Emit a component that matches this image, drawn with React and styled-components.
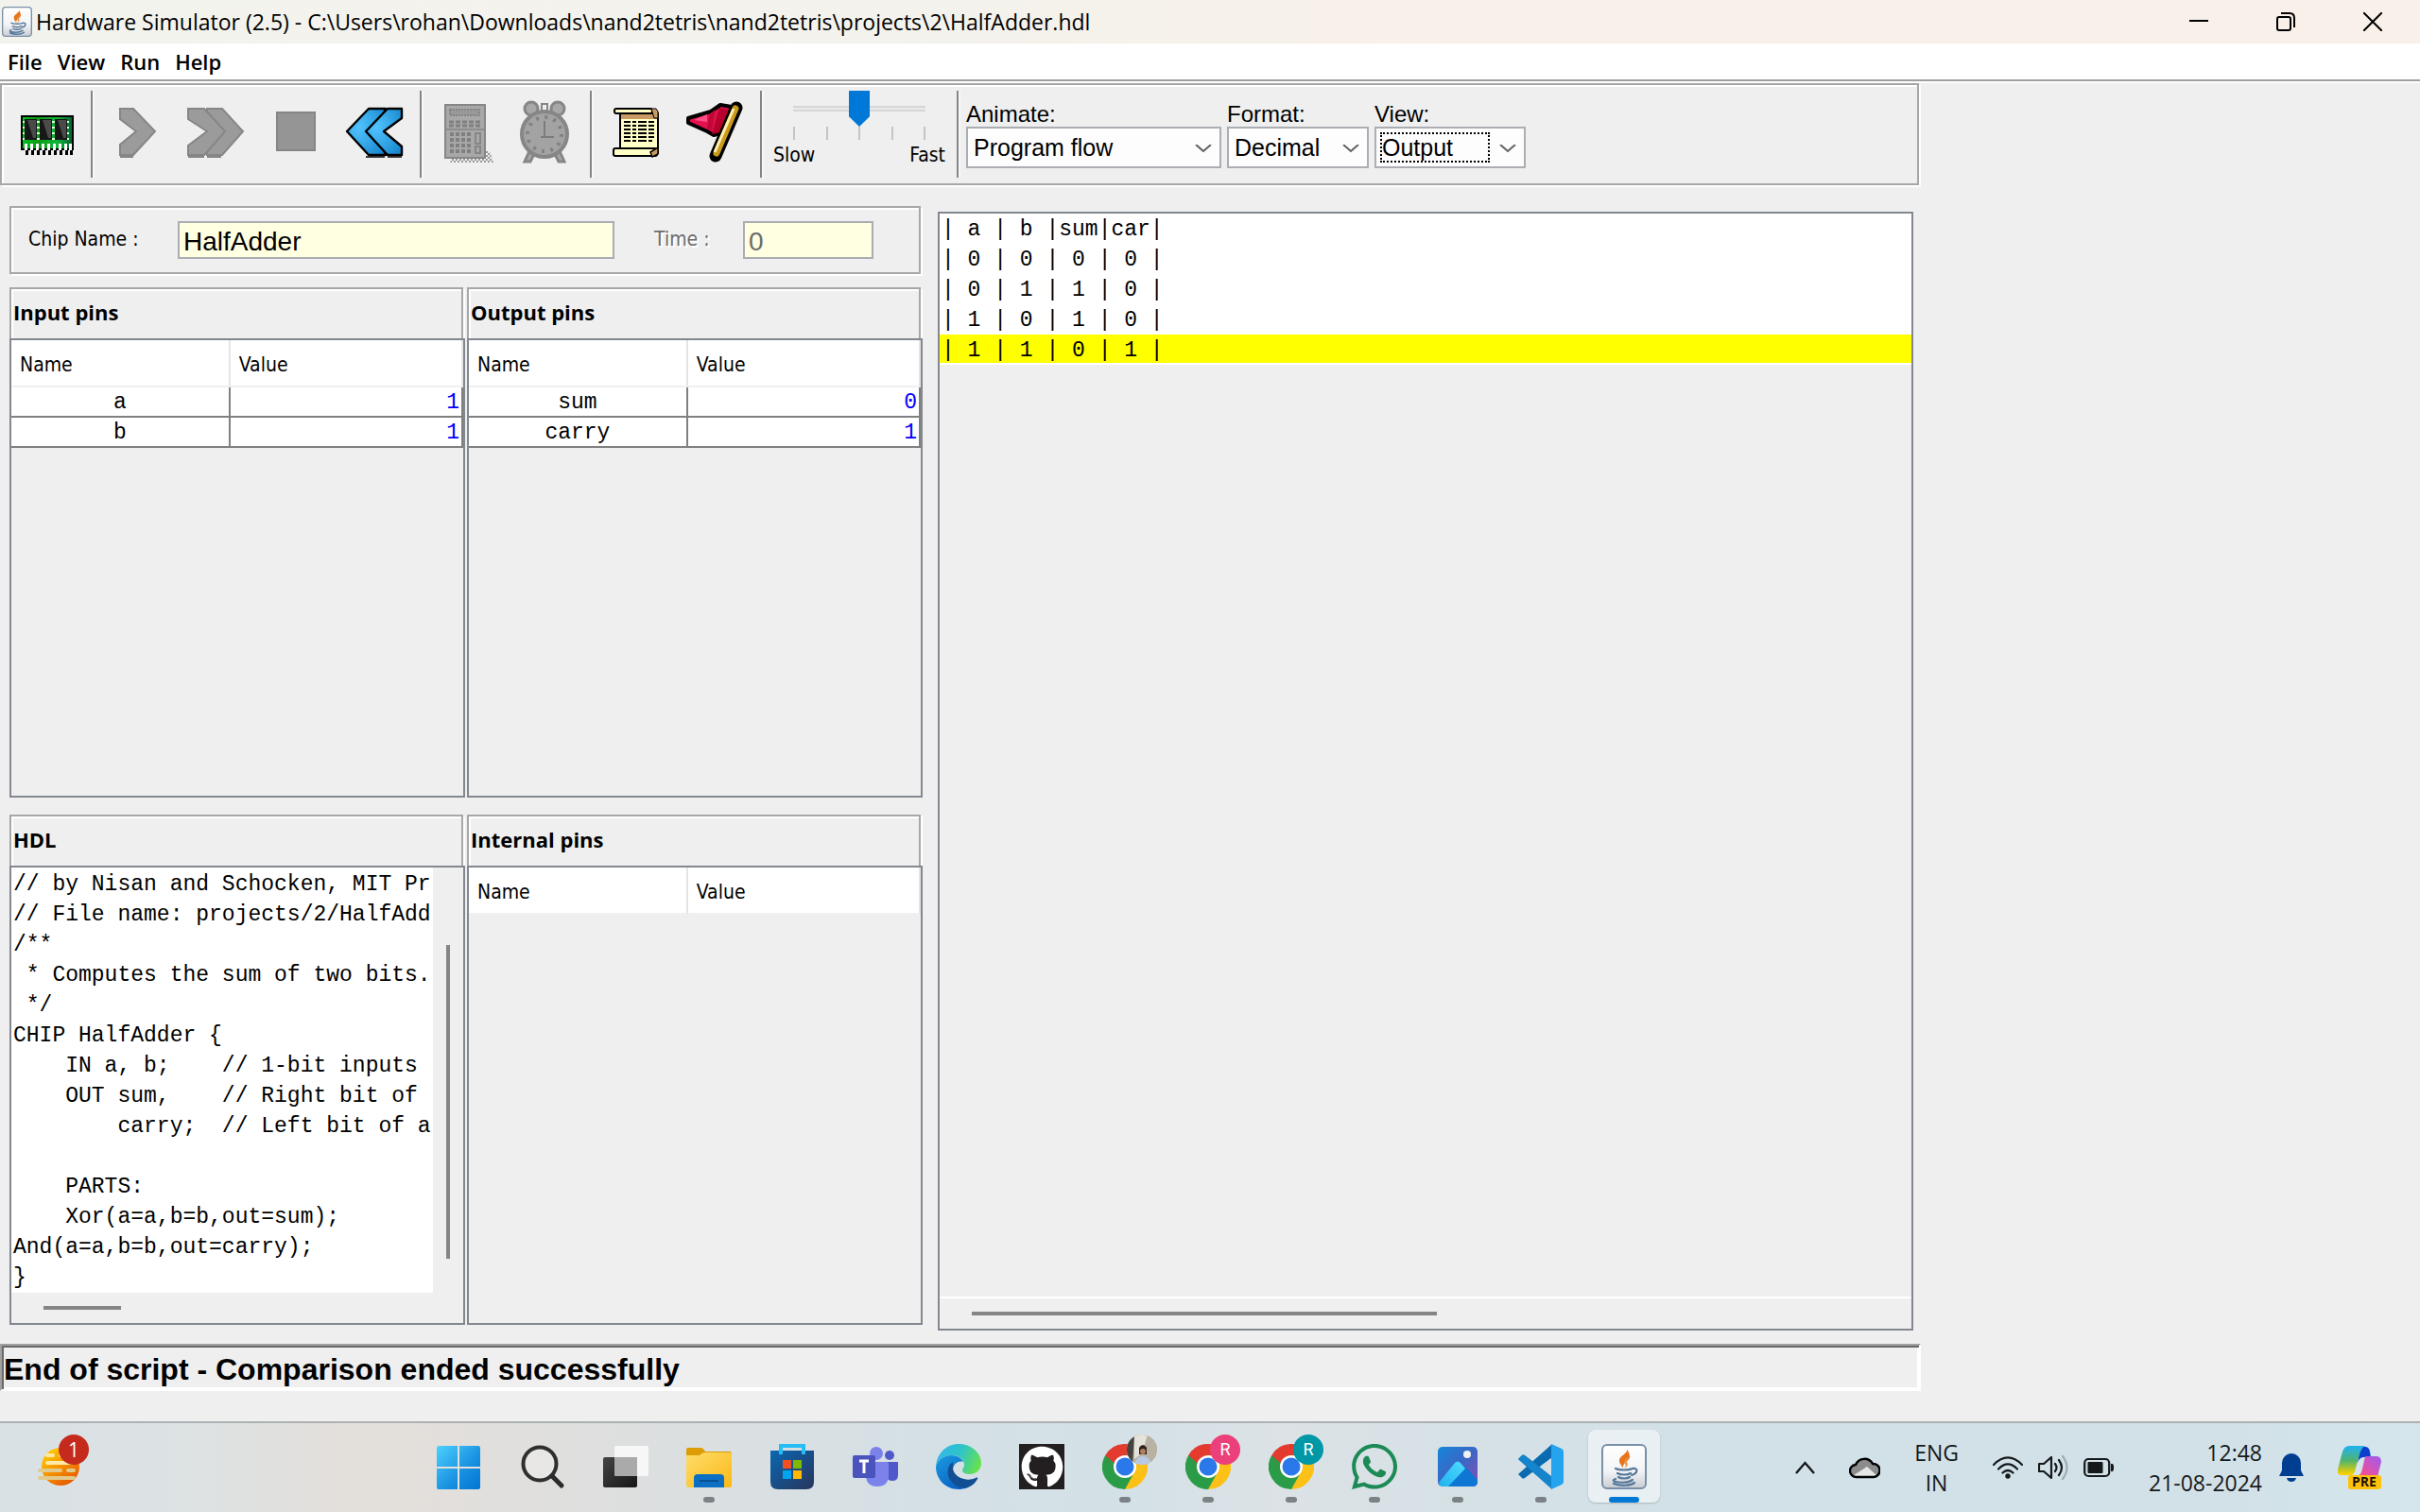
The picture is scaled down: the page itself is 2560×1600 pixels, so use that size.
import React from "react";
import styled, { createGlobalStyle } from "styled-components";
import { FaGithub, FaWhatsapp } from "react-icons/fa";

const UI = `"DejaVu Sans Condensed", "DejaVu Sans", sans-serif`;
const ARIAL = `"Liberation Sans", Arial, sans-serif`;
const MONO = `"Liberation Mono", "Courier New", monospace`;
const SYSTEM = `"Open Sans", "Noto Sans", sans-serif`;

const GlobalStyle = createGlobalStyle`
  * { box-sizing: border-box; }
  body { margin: 0; background: #efefef; color: #000; }
  button, input, select { font: inherit; color: inherit; margin: 0; padding: 0; border: 0; background: none; border-radius: 0; }
  svg { display: block; }
`;

const Desktop = styled.div`
  display: flex;
  flex-direction: column;
  min-height: 100vh;
`;

/* ---------- window frame ---------- */
const TitleBar = styled.header`
  display: flex;
  align-items: center;
  height: 46px;
  padding: 0 4px 0 2px;
  background: linear-gradient(90deg, #f3f3ee, #f4f2ec 40%, #f9f0ea 60%);
  font-family: ${SYSTEM};
  font-size: 23px;
`;
const Title = styled.h1`
  margin: 0 auto 0 4px;
  font-size: 23px;
  font-weight: 400;
  line-height: 32px;
  white-space: pre;
`;
const CaptionButton = styled.button`
  display: grid;
  place-items: center;
  width: 92px;
  height: 46px;
`;
const MenuBar = styled.nav`
  display: flex;
  gap: 16px;
  height: 40px;
  padding: 0 8px;
  background: #fff;
  border-bottom: 2px solid #a0a0a0;
  box-shadow: 0 2px 0 #fff;
  font-family: ${SYSTEM};
  font-size: 22px;
  font-weight: 600;
  line-height: 38px;
`;
const MenuItem = styled.button``;

const Application = styled.main`
  display: flex;
  flex: 1;
  flex-direction: column;
  padding: 0 528px 32px 0;
`;

/* ---------- etched frames ---------- */
const Etched = styled.div`
  margin-right: 2px;
  border: 2px solid #a7a7a7;
  box-shadow: inset 2px 2px 0 #fff, 2px 2px 0 #fff;
`;

/* ---------- toolbar ---------- */
const Toolbar = styled(Etched)`
  display: flex;
  height: 108px;
  margin-top: 2px;
`;
const ToolGroup = styled.div`
  display: flex;
  padding: 0 4px 0 6px;
`;
const Separator = styled.div`
  width: 2px;
  height: 92px;
  margin-top: 6px;
  background: #858585;
  box-shadow: 2px 0 0 #f8f8f8;
`;
const ToolButton = styled.button`
  width: 84px;
  height: 104px;
`;
const SpeedBox = styled.div`
  display: flex;
  flex-direction: column;
  align-items: center;
  width: 206px;
  padding-top: 6px;
  font-family: ${UI};
  font-size: 21px;
  line-height: 32px;
`;
const SpeedRange = styled.input`
  appearance: none;
  width: 140px;
  height: 38px;
  &::-webkit-slider-runnable-track {
    height: 38px;
    background: linear-gradient(transparent 16px, #d6d6d6 16px 18px, #e7eaea 18px 20px, #d6d6d6 20px 22px, transparent 22px);
  }
  &::-webkit-slider-thumb {
    appearance: none;
    width: 22px;
    height: 38px;
    background: #0078d7;
    clip-path: polygon(0 0, 100% 0, 100% 72%, 50% 100%, 0 72%);
  }
`;
const Ticks = styled.div`
  display: flex;
  justify-content: space-between;
  width: 140px;
  height: 14px;
`;
const Tick = styled.span`
  width: 2px;
  background: #c4c4c4;
`;
const SpeedLabels = styled.div`
  display: flex;
  justify-content: space-between;
  width: 182px;
`;
const Combos = styled.div`
  display: flex;
  gap: 6px;
  padding: 18px 0 0 8px;
  font-family: ${ARIAL};
`;
const ComboField = styled.label`
  display: flex;
  flex-direction: column;
  font-size: 24px;
  line-height: 26px;
`;
const ComboFrame = styled.span`
  display: flex;
  position: relative;
  width: ${(p) => p.$width}px;
  height: 44px;
  padding: 4px;
  border: 2px solid #abadb3;
  background: #fdfdfd;
  font-size: 25px;
`;
const ComboSelect = styled.select`
  appearance: none;
  width: 100%;
  height: 32px;
  padding-left: 2px;
  line-height: 32px;
  outline: none;
`;
const FocusRing = styled.span`
  position: absolute;
  inset: 4px 36px 4px 4px;
  border: 2px dotted #000;
  pointer-events: none;
`;
const ComboArrow = styled.svg`
  position: absolute;
  right: 8px;
  top: 17px;
  pointer-events: none;
`;

/* ---------- workspace ---------- */
const Workspace = styled.div`
  display: grid;
  flex: 1;
  grid-template-columns: minmax(0, 966fr) minmax(0, 1032fr);
  gap: 16px;
  padding: 22px 8px 14px 10px;
`;
const LeftSide = styled.div`
  display: flex;
  flex-direction: column;
  gap: 14px;
  padding-bottom: 6px;
`;
const ChipBar = styled(Etched)`
  display: flex;
  align-items: center;
  height: 72px;
  padding: 0 48px 0 18px;
  font-family: ${UI};
  font-size: 21px;
`;
const ChipLabel = styled.label`
  flex: none;
  width: ${(p) => p.$width}px;
  padding-bottom: 2px;
  color: ${(p) => (p.$dim ? "#6d6d6d" : "#000")};
  text-shadow: ${(p) => (p.$dim ? "2px 2px 0 #fff" : "none")};
`;
const ChipInput = styled.input`
  flex: ${(p) => p.$grow} 1 0;
  min-width: 0;
  height: 40px;
  margin-right: ${(p) => p.$after}px;
  padding: 4px 4px 0;
  border: 2px solid #abadb3;
  background: #ffffe1;
  color: ${(p) => (p.disabled ? "#6d6d6d" : "#000")};
  font-family: ${ARIAL};
  font-size: 28px;
`;
const PanelGrid = styled.div`
  display: grid;
  flex: 1;
  grid-template-columns: repeat(2, minmax(0, 1fr));
  grid-auto-rows: minmax(0, 1fr);
  gap: 18px 2px;
`;
const Panel = styled.section`
  display: flex;
  flex-direction: column;
`;
const PanelTitle = styled(Etched).attrs({ as: "h2" })`
  height: 54px;
  margin: 0 2px 0 0;
  padding: 0 4px 0 2px;
  border-bottom: 0;
  font-family: ${SYSTEM};
  font-size: 22px;
  font-weight: 700;
  line-height: 48px;
`;
const PanelBody = styled.div`
  flex: 1;
  min-height: 0;
  border: 2px solid #828790;
  z-index: 1;
`;
const PinTable = styled.table`
  width: 100%;
  border-collapse: separate;
  border-spacing: 0;
  table-layout: fixed;
`;
const PinHead = styled.th`
  width: ${(p) => p.$width};
  height: 50px;
  padding: 4px 0 0 9px;
  background: #fff;
  border-right: 2px solid #e5e5e5;
  border-bottom: 2px solid #f0f0f0;
  font-family: ${UI};
  font-size: 21px;
  font-weight: 400;
  text-align: left;
`;
const PinCell = styled.td`
  height: 32px;
  padding: ${(p) => (p.$value ? "2px 2px 0 0" : "2px 0 0")};
  background: #fff;
  border-right: 2px solid #808080;
  border-bottom: 2px solid #808080;
  color: ${(p) => (p.$value ? "#00f" : "#000")};
  font-family: ${MONO};
  font-size: 23px;
  line-height: 28px;
  text-align: ${(p) => (p.$value ? "right" : "center")};
`;
const HdlBody = styled(PanelBody)`
  display: grid;
  grid-template: minmax(0, 1fr) 32px / minmax(0, 1fr) 32px;
`;
const Code = styled.pre`
  margin: 0;
  padding: 2px 2px 0;
  background: #fff;
  overflow: hidden;
  font-family: ${MONO};
  font-size: 23px;
  line-height: 32px;
`;
const VerticalTrack = styled.div`
  padding: 82px 14px 36px;
`;
const HorizontalTrack = styled.div`
  height: 32px;
  padding: 14px 34px;
`;
const Thumb = styled.div`
  width: ${(p) => p.$width};
  height: ${(p) => p.$height};
  background: #858585;
`;
const OutputPanel = styled.section`
  display: flex;
  flex-direction: column;
  margin-top: 6px;
  border: 2px solid #828790;
`;
const OutputLines = styled.div`
  flex: 1;
  border-bottom: 2px solid #fff;
`;
const OutputLine = styled.pre`
  height: 32px;
  margin: 0;
  padding: 0 2px;
  background: ${(p) => (p.$current ? "#ff0" : "#fff")};
  border-bottom: 2px solid #fff;
  font-family: ${MONO};
  font-size: 23px;
  line-height: 34px;
`;
const StatusBar = styled.div`
  height: 50px;
  border-style: solid;
  border-width: 2px;
  border-color: #a0a0a0 #fff #fff #a0a0a0;
  box-shadow: inset 2px 2px 0 #696969, inset -2px -2px 0 #fff;
  padding-left: 2px;
  font-family: ${ARIAL};
  font-size: 32px;
  font-weight: 700;
  line-height: 50px;
  white-space: nowrap;
`;

/* ---------- taskbar ---------- */
const Taskbar = styled.footer`
  display: flex;
  height: 96px;
  border-top: 2px solid #acb1b3;
  background: linear-gradient(90deg, #d9e1e6, #dde2e3 8%, #e3dfdb 14%, #e3dfdb 17%, #dddfdf 26%, #d5e0e5 38%, #d3e1e7 46%, #dce2e6 53%, #d6e1e6 60%, #d1e1e7 72%, #d1e1e7 92%, #d5e6ed);
  font-family: ${SYSTEM};
  color: #16191b;
`;
const Widgets = styled.div`
  width: 442px;
  padding: 12px 0 0 40px;
`;
const WidgetsButton = styled.button`
  display: block;
  position: relative;
  width: 54px;
  height: 54px;
`;
const Badge = styled.span`
  position: absolute;
  top: 0;
  right: 0;
  width: 32px;
  height: 32px;
  border-radius: 50%;
  background: #c42b1c;
  color: #fff;
  font-size: 21px;
  line-height: 32px;
  text-align: center;
`;
const Apps = styled.div`
  display: flex;
  margin-right: auto;
`;
const AppButton = styled.button`
  display: flex;
  flex-direction: column;
  align-items: center;
  justify-content: space-between;
  position: relative;
  width: 76px;
  height: 77px;
  margin: 7px 6px 0;
  padding-top: 15px;
  border-radius: 8px;
  background: ${(p) => (p.$active ? "rgba(255,255,255,.5)" : "none")};
  box-shadow: ${(p) => (p.$active ? "0 1px 2px rgba(0,0,0,.2)" : "none")};
`;
const Indicator = styled.span`
  width: ${(p) => (p.$active ? 32 : 12)}px;
  height: 6px;
  border-radius: 3px;
  background: ${(p) => (p.$active ? "#0078d4" : "#7b8184")};
  visibility: ${(p) => (p.$on ? "visible" : "hidden")};
`;
const Profile = styled.span`
  position: absolute;
  top: 5px;
  right: 4px;
  width: 32px;
  height: 32px;
  border-radius: 50%;
  overflow: hidden;
  background: ${(p) => p.$color};
  color: #fff;
  font-family: Roboto, sans-serif;
  font-size: 18px;
  line-height: 32px;
  text-align: center;
`;
const Tray = styled.div`
  display: flex;
  align-items: center;
  gap: 36px;
  padding-right: 41px;
  font-size: 23px;
  line-height: 32px;
`;
const TrayGroup = styled.div`
  display: flex;
  align-items: center;
  gap: ${(p) => p.$gap}px;
`;
const TrayButton = styled.button`
  text-align: ${(p) => p.$align || "center"};
`;
const GithubTile = styled.span`
  display: grid;
  place-items: center;
  width: 48px;
  height: 48px;
  background: #231f20;
  color: #fff;
`;

/* ---------- icons ---------- */
const JavaIcon = ({ size, id }) => (
  <svg width={size} height={size} viewBox="0 0 48 48">
    <defs>
      <linearGradient id={id} x1="0" y1="0" x2="0" y2="1">
        <stop offset="0" stopColor="#fff" />
        <stop offset=".6" stopColor="#f3f4f6" />
        <stop offset="1" stopColor="#c9ccd1" />
      </linearGradient>
    </defs>
    <rect x="1" y="1" width="46" height="46" rx="5" fill={`url(#${id})`} stroke="#7890a8" strokeWidth="2" />
    <path d="M27 5c2 5-9 8-8 13 0 3 3 5 4 8-2-6 8-8 7-13 0-3-2-5-3-8z" fill="#e8741b" />
    <path d="M31 13c-5 2-8 5-6 8 1 2 1 3-1 5 5-3 4-5 3-7-1-2 1-4 4-6z" fill="#f09448" />
    <g fill="none" stroke="#55789b" strokeWidth="2.2" strokeLinecap="round">
      <path d="M15 26c4 2 14 2 18 0M17 31c3 2 11 2 14 0M18 35c3 2 9 2 12 0M33 26c6-1 6 5-1 7" />
      <path d="M15 37c-9 3 11 6 18 1M13 42c8 3 18 2 22-1" />
    </g>
  </svg>
);

const Icon = ({ children }) => (
  <svg width="84" height="104" viewBox="0 0 84 104">{children}</svg>
);

const LoadChipIcon = () => (
  <Icon>
    <defs>
      <linearGradient id="board"><stop stopColor="#00c322" /><stop offset=".3" stopColor="#0a9c14" /><stop offset=".7" stopColor="#10b53c" /><stop offset="1" stopColor="#04602c" /></linearGradient>
    </defs>
    <rect x="15" y="33" width="54" height="35" fill="url(#board)" stroke="#000" strokeWidth="2" />
    {[18, 34, 50].map((x) => (
      <g key={x}>
        <path d={`M${x - 1} 38v20M${x + 14} 38v20`} stroke="#dfffdc" strokeWidth="2" strokeDasharray="2 4" />
        <rect x={x} y="36" width="13" height="22" fill="#171717" />
        <path d={`M${x + 3} 37l6 19h3v-19z`} fill="#4a4a4a" />
      </g>
    ))}
    {[18, 24, 30, 36, 42, 48, 54, 60, 65].map((x) => (
      <g key={x}>
        <rect x={x} y="62" width="3" height="7" fill="#fff" />
        <rect x={x + 1} y="69" width="3" height="5" fill="#000" />
      </g>
    ))}
  </Icon>
);
const StepIcon = () => (
  <Icon>
    <path d="M23 25h14l23 24-23 25H23v-11l17-14L23 36z" fill="#9b9b9b" stroke="#868686" strokeWidth="2" />
    <path d="M23 76h14" stroke="#868686" strokeWidth="2" />
  </Icon>
);
const RunIcon = () => (
  <Icon>
    <g fill="#9b9b9b" stroke="#868686" strokeWidth="2">
      <path d="M11 25h17l23 24-23 25H11v-10l20-15L11 36z" />
      <path d="M31 25h16l22 24-22 25H31v-3l19-22L31 28z" />
    </g>
    <path d="M11 76h17M31 76h15" stroke="#868686" strokeWidth="2" />
  </Icon>
);
const StopIcon = () => (
  <Icon><rect x="21" y="29" width="40" height="40" fill="#959595" stroke="#868686" strokeWidth="2" /></Icon>
);
const RewindIcon = () => (
  <Icon>
    <defs>
      <radialGradient id="rew" cx=".3" cy=".4" r=".8"><stop stopColor="#52c3ff" /><stop offset="1" stopColor="#1989cf" /></radialGradient>
    </defs>
    <path d="M31 76h20M54 76h15" stroke="#3a3a3a" strokeWidth="2" />
    <g fill="url(#rew)" stroke="#000" strokeWidth="2.4" strokeLinejoin="round">
      <path d="M52 25H34L11 49l23 25h18L42 49z" />
      <path d="M69 25H54L31 49l23 25h15V65L50 49l19-14z" />
    </g>
  </Icon>
);
const CalculatorIcon = () => (
  <Icon>
    <defs>
      <pattern id="dither" width="4" height="4" patternUnits="userSpaceOnUse"><path d="M0 0h2v2H0zM2 2h2v2H2z" fill="#999" /></pattern>
    </defs>
    <path d="M26 78h26V70h14l4 12H24z" fill="url(#dither)" />
    <rect x="19" y="21" width="42" height="56" fill="#a8a8a8" stroke="#868686" strokeWidth="2" />
    <rect x="24" y="26" width="31" height="6" fill="#999" stroke="#858585" strokeWidth="2" strokeDasharray="2 1" />
    <path d="M23 39h34M23 43h34" stroke="#808080" strokeWidth="3" strokeDasharray="5 2" />
    <path d="M20 47h40" stroke="#8d8d8d" strokeWidth="2" />
    <path d="M24 52h22M24 58h22M24 64h22M24 70h22" stroke="#808080" strokeWidth="4" strokeDasharray="4 2" />
    <rect x="51" y="51" width="5" height="11" fill="none" stroke="#868686" strokeWidth="2" />
    <rect x="51" y="65" width="5" height="7" fill="none" stroke="#868686" strokeWidth="2" />
  </Icon>
);
const ClockIcon = () => (
  <Icon>
    <g fill="#a8a8a8" stroke="#868686" strokeWidth="3">
      <circle cx="26" cy="25" r="7" /><circle cx="54" cy="25" r="7" />
      <path d="M24 70l-5 11h6l4-8M56 70l5 11h-6l-4-8" />
    </g>
    <path d="M37 20h6v10h-6z" fill="#efefef" stroke="#868686" strokeWidth="2" />
    <circle cx="40" cy="52" r="24" fill="#a3a3a3" stroke="#868686" strokeWidth="4" />
    <circle cx="40" cy="52" r="18" fill="none" stroke="#818181" strokeWidth="4" strokeDasharray="3 6.4" />
    <path d="M40 38v17h10M36 55h4" fill="none" stroke="#7c7c7c" strokeWidth="2" />
  </Icon>
);
const ScriptIcon = () => (
  <Icon>
    <path d="M24 30h40v42H24z" fill="#ffffc6" stroke="#000" strokeWidth="2" />
    <path d="M25 31h38v5H25z" fill="#c99a63" />
    <rect x="18" y="25" width="40" height="5" rx="2" fill="#ffffc6" stroke="#000" strokeWidth="2" />
    <path d="M57 25h5l2 3v7h-4z" fill="#c99a63" stroke="#000" strokeWidth="1" />
    <rect x="17" y="67" width="46" height="8" rx="2" fill="#ffffc6" stroke="#000" strokeWidth="2" />
    <path d="M56 71l8-5v7l-6 3z" fill="#c99a63" stroke="#000" strokeWidth="1.5" />
    <path d="M28 39h32M28 43h32M28 47h32M28 51h32M28 55h32M28 59h30" stroke="#000" strokeWidth="2" strokeDasharray="7 2 4 2 9 2" />
  </Icon>
);
const BreakpointIcon = () => (
  <Icon>
    <path d="M36 28l10-7 12 2-11 28-8 2-7-4-20-9v-5z" fill="#e3114d" stroke="#000" strokeWidth="4" strokeLinejoin="round" />
    <path d="M45 24l9 2-8 24-9 2z" fill="#b8002c" />
    <path d="M35 30l6-4-4 22-5-2z" fill="#c00836" />
    <path d="M18 37l14-6v8z" fill="#ff4d88" />
    <path d="M63 24L41 75" stroke="#000" strokeWidth="13" strokeLinecap="round" />
    <path d="M62 25L42 72" stroke="#c99a1c" strokeWidth="7" strokeLinecap="round" />
    <path d="M60 25L40 71" stroke="#ffeeb0" strokeWidth="3" />
  </Icon>
);

const WidgetsIcon = () => (
  <svg width="54" height="54" viewBox="0 0 54 54">
    <defs>
      <linearGradient id="sun" x1="0" y1="0" x2=".7" y2="1"><stop offset=".1" stopColor="#ffcf00" /><stop offset=".5" stopColor="#f79a00" /><stop offset="1" stopColor="#e65800" /></linearGradient>
    </defs>
    <circle cx="24" cy="34" r="20" fill="url(#sun)" />
    <g stroke="#ffe9a8" strokeWidth="4" strokeLinecap="round">
      <path d="M10 22h6M24 22h8M10 30h26" /><path d="M32 38h6M2 38h22M2 46h36" stroke="#e2c98c" />
    </g>
  </svg>
);
const Svg48 = ({ children }) => (
  <svg width="48" height="48" viewBox="0 0 48 48">{children}</svg>
);
const StartIcon = () => (
  <Svg48>
    <defs>
      <linearGradient id="win" gradientUnits="userSpaceOnUse" x1="0" y1="0" x2="48" y2="48"><stop stopColor="#50d3ff" /><stop offset=".6" stopColor="#1690e0" /><stop offset="1" stopColor="#0074d3" /></linearGradient>
    </defs>
    <path d="M3 2h19v22H0V4q0-2 3-2zM24 2h20q2 0 2 2v20H24zM0 26h22v22H3q-3 0-3-2zM24 26h22v20q0 2-2 2H24z" fill="url(#win)" />
  </Svg48>
);
const SearchIcon = () => (
  <Svg48>
    <circle cx="21" cy="21" r="17.5" fill="rgba(255,255,255,.25)" stroke="#2f2f2f" strokeWidth="4" />
    <path d="M34 34l10 10" stroke="#2a2a2a" strokeWidth="5" strokeLinecap="round" />
  </Svg48>
);
const TaskViewIcon = () => (
  <Svg48>
    <defs>
      <linearGradient id="tv" x1="0" y1="0" x2="1" y2="1"><stop stopColor="#444" /><stop offset="1" stopColor="#161616" /></linearGradient>
    </defs>
    <rect x="0" y="14" width="36" height="32" rx="2" fill="url(#tv)" />
    <rect x="12" y="2" width="36" height="32" rx="2" fill="#f8f8f8" fillOpacity=".92" />
    <path d="M12 14h24v20H14q-2 0-2-2z" fill="#aaa" />
  </Svg48>
);
const FolderIcon = () => (
  <Svg48>
    <defs>
      <linearGradient id="fold" x1="0" y1="0" x2="1" y2="1"><stop stopColor="#ffdc6b" /><stop offset="1" stopColor="#fbb916" /></linearGradient>
    </defs>
    <path d="M0 6q0-2 2-2h13q3 0 5 4h26q2 0 2 3v14H0z" fill="#dd9d05" />
    <path d="M0 12h14q3-3 6-3h26q2 0 2 2v33q0 2-2 2H2q-2 0-2-2z" fill="url(#fold)" />
    <path d="M8 46V36q0-4 4-4h24q4 0 4 4v10z" fill="#0c6fc4" />
    <path d="M14 39h20" stroke="#094f93" strokeWidth="2" />
  </Svg48>
);
const StoreIcon = () => (
  <Svg48>
    <defs>
      <linearGradient id="bag" x1="0" y1="0" x2="1" y2="1"><stop stopColor="#0a67b2" /><stop offset="1" stopColor="#28355c" /></linearGradient>
    </defs>
    <path d="M1 7h46v33q0 8-8 8H9q-8 0-8-8z" fill="url(#bag)" />
    <path d="M12 11V2h24v9" fill="none" stroke="#25bdf5" strokeWidth="4" />
    <path d="M14 17h9v9h-9z" fill="#f25022" /><path d="M25 17h9v9h-9z" fill="#7fba00" />
    <path d="M14 28h9v9h-9z" fill="#00a4ef" /><path d="M25 28h9v9h-9z" fill="#ffb900" />
  </Svg48>
);
const TeamsIcon = () => (
  <Svg48>
    <circle cx="39" cy="12" r="5" fill="#5059c9" />
    <path d="M36 19h12v14q0 6-6 6t-6-6z" fill="#5059c9" />
    <circle cx="25" cy="10" r="7" fill="#7b83eb" />
    <path d="M14 19h22q2 0 2 2v12q0 12-12 12T14 33z" fill="#7b83eb" />
    <rect x="0" y="12" width="24" height="24" rx="2" fill="#4b53bc" />
    <path d="M7 18h10M12 18v13" stroke="#fff" strokeWidth="3" />
  </Svg48>
);
const EdgeIcon = () => (
  <Svg48>
    <defs>
      <linearGradient id="edgeA" x1="0" y1=".3" x2="1" y2=".6"><stop stopColor="#35b5ea" /><stop offset=".5" stopColor="#2ec5c8" /><stop offset="1" stopColor="#68e24a" /></linearGradient>
      <linearGradient id="edgeB" x1="0" y1="0" x2=".6" y2="1"><stop stopColor="#1a9be0" /><stop offset="1" stopColor="#0b62c4" /></linearGradient>
    </defs>
    <path d="M0 24C1 10 11 0 24 0c14 0 24 10 24 20 0 8-6 12-12 12-5 0-8-2-8-4s2-3 2-6c0-5-5-10-13-10C8 12 2 17 0 24z" fill="url(#edgeA)" />
    <path d="M0 24c2-7 8-12 17-12 6 0 10 3 12 7-6-2-11 3-11 9 0 10 7 17 16 18-3 1-6 2-10 2C10 48 0 37 0 24z" fill="url(#edgeB)" />
    <path d="M18 19c-6 4-7 12-3 19 4 6 11 10 19 8 5-2 8-5 10-9 1-1 0-2-2-1-11 5-24-2-24-11 0-2 0-4 0-6z" fill="#124f92" />
  </Svg48>
);
const ChromeIcon = () => (
  <Svg48>
    <path d="M24 24L3.200 12A24 24 0 0 1 44.800 12z" fill="#e33b2e" />
    <path d="M24 24L44.800 12A24 24 0 0 1 24 48z" fill="#fbc116" />
    <path d="M24 24L24 48A24 24 0 0 1 3.200 12z" fill="#2a9c48" />
    <path d="M24 12h20.800L34 30z" fill="#fbc116" />
    <path d="M34 30L24 48l-10-18z" fill="#2a9c48" />
    <path d="M3.200 12L14 30l10-18z" fill="#e33b2e" />
    <path d="M3.200 12L14 30l3-6z" fill="#2a9c48" />
    <circle cx="24" cy="24" r="12" fill="#fff" />
    <circle cx="24" cy="24" r="9.500" fill="#2a78ea" />
  </Svg48>
);
const ProfilePhoto = () => (
  <svg width="32" height="32" viewBox="0 0 32 32">
    <path d="M0 0h32v32H0z" fill="#b9b2a4" /><path d="M0 0h8L6 32H0z" fill="#45423f" />
    <path d="M8 0h14l-6 20-8 6z" fill="#e4e2da" />
    <path d="M13 14q4-6 8 0v7h-8z" fill="#30221b" />
    <circle cx="17" cy="18" r="3" fill="#b37f60" /><path d="M8 32q2-9 9-9t9 9z" fill="#b9cbe4" />
  </svg>
);
const PhotosIcon = () => (
  <Svg48>
    <defs>
      <linearGradient id="ph" x1="0" y1="0" x2="1" y2="1"><stop stopColor="#1487dc" /><stop offset=".5" stopColor="#3c66c4" /><stop offset="1" stopColor="#8b4db5" /></linearGradient>
      <linearGradient id="hill" x1="0" y1="1" x2="1" y2="0"><stop stopColor="#22b1ee" /><stop offset="1" stopColor="#4cdcff" /></linearGradient>
    </defs>
    <rect x="3" y="3" width="42" height="42" rx="5" fill="url(#ph)" />
    <path d="M12 45l16-19q3-3 6 0l11 12v2q0 5-5 5z" fill="#0e76d3" />
    <path d="M4 41l17-21q3-3 6 0l5 6-18 19H8q-3 0-4-4z" fill="url(#hill)" />
    <circle cx="34" cy="11" r="4" fill="#f1f1f1" />
  </Svg48>
);
const CodeIcon = () => (
  <Svg48>
    <path d="M0 16l4-4q1-1 3 0l29 23v13z" fill="#1584cb" />
    <path d="M0 32l4 4q1 1 3 0l29-22V0z" fill="#0a6bb0" />
    <path d="M0 16l4-4q1-1 3 0l29 23v13z" fill="#1584cb" />
    <path d="M35 0l11 5q2 1 2 3v32q0 2-2 3l-11 5z" fill="#26a3ee" />
  </Svg48>
);
const ChevronIcon = () => (
  <svg width="21" height="14" viewBox="0 0 21 14"><path d="M1 13L10.500 2 20 13" fill="none" stroke="#16191b" strokeWidth="2.400" /></svg>
);
const CloudIcon = () => (
  <svg width="33" height="24" viewBox="0 0 33 24">
    <path d="M8 22a6.500 6.500 0 0 1-1-13 10 10 0 0 1 18-1 7 7 0 0 1 1 14z" fill="#8c8c8c" />
    <path d="M5 20L19 11l10 9-3 2H8z" fill="#e6e6e6" />
    <path d="M8 22a6.500 6.500 0 0 1-1-13 10 10 0 0 1 18-1 7 7 0 0 1 1 14z" fill="none" stroke="#000" strokeWidth="2.400" />
  </svg>
);
const WifiIcon = () => (
  <svg width="32" height="24" viewBox="0 0 32 24" fill="none" stroke="#16191b" strokeWidth="2.200" strokeLinecap="round">
    <path d="M1 9q15-15 30 0M6 13.500q10-10 20 0M10.500 17.500q5.500-5 11 0" /><circle cx="16" cy="21" r="1.600" fill="#16191b" />
  </svg>
);
const SoundIcon = () => (
  <svg width="32" height="28" viewBox="0 0 32 28" fill="none" stroke="#16191b" strokeWidth="2.200" strokeLinejoin="round" strokeLinecap="round">
    <path d="M1 10h5l8-7v22l-8-7H1zM18 10q3 4 0 8M22 6q6 8 0 16" /><path d="M26 2q9 12 0 24" stroke="#9fadb3" />
  </svg>
);
const BatteryIcon = () => (
  <svg width="33" height="22" viewBox="0 0 33 22">
    <rect x="1.200" y="2" width="26" height="18" rx="4" fill="none" stroke="#16191b" strokeWidth="2.200" />
    <rect x="4.500" y="5" width="16" height="12" rx="1" fill="#16191b" /><path d="M29 7h2l1 2v4l-1 2h-2z" fill="#16191b" />
  </svg>
);
const BellIcon = () => (
  <svg width="26" height="30" viewBox="0 0 26 30" fill="#003e92">
    <path d="M13 0a10 10 0 0 1 10 10v8l3 6H0l3-6v-8A10 10 0 0 1 13 0zM8 26h10q-1 4-5 4t-5-4z" />
  </svg>
);
const PreText = styled.text`
  font-family: ${SYSTEM};
  font-size: 14px;
  font-weight: 700;
`;
const CopilotIcon = () => (
  <svg width="46" height="46" viewBox="0 0 46 46">
    <defs>
      <linearGradient id="cpA" x1="0" y1="0" x2="0" y2="1"><stop stopColor="#1fb2f2" /><stop offset=".5" stopColor="#4fb46f" /><stop offset=".95" stopColor="#f5d000" /></linearGradient>
      <linearGradient id="cpB" x1="1" y1="0" x2="0" y2="1"><stop stopColor="#9b5cf5" /><stop offset=".6" stopColor="#f04f98" /><stop offset="1" stopColor="#ff9b55" /></linearGradient>
    </defs>
    <path d="M24 1h5q4 0 5 5l1 6h-8q-4 0-6 6z" fill="#0b3fce" />
    <path d="M29 11h12q5 0 5 6l-4 16q-2 6-7 6H12q4-2 5-8h5q3-1 4-7z" fill="url(#cpB)" />
    <path d="M12 0h17q-4 2-6 9l-5 18q-1 4-5 4H4q-5 0-4-6l5-19q2-6 7-6z" fill="url(#cpA)" />
    <rect x="11" y="31" width="35" height="15" rx="3" fill="#ffc20a" />
    <PreText x="28" y="43" textAnchor="middle" fill="#1b1200">PRE</PreText>
  </svg>
);

/* ---------- data ---------- */
const HDL_SOURCE = `// by Nisan and Schocken, MIT Pr
// File name: projects/2/HalfAdd
/**
 * Computes the sum of two bits.
 */
CHIP HalfAdder {
    IN a, b;    // 1-bit inputs
    OUT sum,    // Right bit of
        carry;  // Left bit of a

    PARTS:
    Xor(a=a,b=b,out=sum);
And(a=a,b=b,out=carry);
}`;
const OUTPUT = [
  "| a | b |sum|car|",
  "| 0 | 0 | 0 | 0 |",
  "| 0 | 1 | 1 | 0 |",
  "| 1 | 0 | 1 | 0 |",
  "| 1 | 1 | 0 | 1 |",
];
const TOOL_GROUPS = [
  [["Load chip", LoadChipIcon]],
  [["Single step", StepIcon, true], ["Run", RunIcon, true], ["Stop", StopIcon, true], ["Reset", RewindIcon]],
  [["Eval", CalculatorIcon, true], ["Tick tock", ClockIcon, true]],
  [["Load script", ScriptIcon], ["Breakpoints", BreakpointIcon]],
];
const APPS = [
  { name: "Start", icon: <StartIcon /> },
  { name: "Search", icon: <SearchIcon /> },
  { name: "Task view", icon: <TaskViewIcon /> },
  { name: "File Explorer", icon: <FolderIcon />, on: true },
  { name: "Microsoft Store", icon: <StoreIcon /> },
  { name: "Teams", icon: <TeamsIcon /> },
  { name: "Edge", icon: <EdgeIcon /> },
  { name: "GitHub", icon: <GithubTile><FaGithub size={45} /></GithubTile> },
  { name: "Chrome, first profile", icon: <ChromeIcon />, on: true, profile: <ProfilePhoto />, color: "#b9b2a4" },
  { name: "Chrome, second profile", icon: <ChromeIcon />, on: true, profile: "R", color: "#ec407a" },
  { name: "Chrome, third profile", icon: <ChromeIcon />, on: true, profile: "R", color: "#0097a7" },
  { name: "WhatsApp", icon: <FaWhatsapp size={48} color="#1b8a55" viewBox="0 32 448 448" />, on: true },
  { name: "Photos", icon: <PhotosIcon />, on: true },
  { name: "Visual Studio Code", icon: <CodeIcon />, on: true },
  { name: "Java", icon: <JavaIcon size={48} id="javaTask" />, on: true, active: true },
];

function Combo({ label, value, width, focused }) {
  return (
    <ComboField>
      {label}
      <ComboFrame $width={width}>
        <ComboSelect defaultValue={value}>
          <option>{value}</option>
        </ComboSelect>
        {focused && <FocusRing />}
        <ComboArrow width="18" height="9" viewBox="0 0 18 9">
          <path d="M1 0l8 7 8-7" fill="none" stroke="#606060" strokeWidth="2" />
        </ComboArrow>
      </ComboFrame>
    </ComboField>
  );
}

function Pins({ title, pins }) {
  return (
    <Panel>
      <PanelTitle>{title}</PanelTitle>
      <PanelBody>
        <PinTable>
          <thead>
            <tr>
              <PinHead $width="48.5%">Name</PinHead>
              <PinHead>Value</PinHead>
            </tr>
          </thead>
          <tbody>
            {pins.map(([name, value]) => (
              <tr key={name}>
                <PinCell>{name}</PinCell>
                <PinCell $value>{value}</PinCell>
              </tr>
            ))}
          </tbody>
        </PinTable>
      </PanelBody>
    </Panel>
  );
}

export default function App() {
  return (
    <Desktop>
      <GlobalStyle />
      <TitleBar>
        <JavaIcon size={32} id="javaTitle" />
        <Title>{"Hardware Simulator (2.5) - C:\\Users\\rohan\\Downloads\\nand2tetris\\nand2tetris\\projects\\2\\HalfAdder.hdl"}</Title>
        <CaptionButton aria-label="Minimize">
          <svg width="20" height="20"><path d="M0 9h20" stroke="#000" strokeWidth="2" /></svg>
        </CaptionButton>
        <CaptionButton aria-label="Restore">
          <svg width="20" height="20" fill="none" stroke="#000" strokeWidth="2">
            <rect x="1" y="5" width="14" height="14" rx="2" /><path d="M5 1h9q5 0 5 5v10" />
          </svg>
        </CaptionButton>
        <CaptionButton aria-label="Close">
          <svg width="20" height="20"><path d="M0 0l20 20M20 0L0 20" stroke="#000" strokeWidth="2" /></svg>
        </CaptionButton>
      </TitleBar>
      <MenuBar>
        {["File", "View", "Run", "Help"].map((m) => <MenuItem key={m}>{m}</MenuItem>)}
      </MenuBar>

      <Application>
        <Toolbar>
          {TOOL_GROUPS.map((group, i) => (
            <React.Fragment key={i}>
              <ToolGroup>
                {group.map(([name, Glyph, off]) => (
                  <ToolButton key={name} aria-label={name} disabled={off}><Glyph /></ToolButton>
                ))}
              </ToolGroup>
              <Separator />
            </React.Fragment>
          ))}
          <SpeedBox>
            <SpeedRange type="range" min="0" max="4" defaultValue="2" aria-label="Animation speed" />
            <Ticks>{[0, 1, 2, 3, 4].map((t) => <Tick key={t} />)}</Ticks>
            <SpeedLabels><span>Slow</span><span>Fast</span></SpeedLabels>
          </SpeedBox>
          <Separator />
          <Combos>
            <Combo label="Animate:" value="Program flow" width={270} />
            <Combo label="Format:" value="Decimal" width={150} />
            <Combo label="View:" value="Output" width={160} focused />
          </Combos>
        </Toolbar>

        <Workspace>
          <LeftSide>
            <ChipBar>
              <ChipLabel htmlFor="chip" $width={158}>Chip Name :</ChipLabel>
              <ChipInput id="chip" defaultValue="HalfAdder" $grow={450} $after={42} />
              <ChipLabel htmlFor="time" $width={94} $dim>Time :</ChipLabel>
              <ChipInput id="time" defaultValue="0" disabled $grow={126} $after={0} />
            </ChipBar>
            <PanelGrid>
              <Pins title="Input pins" pins={[["a", 1], ["b", 1]]} />
              <Pins title="Output pins" pins={[["sum", 0], ["carry", 1]]} />
              <Panel>
                <PanelTitle>HDL</PanelTitle>
                <HdlBody>
                  <Code>{HDL_SOURCE}</Code>
                  <VerticalTrack><Thumb $width="4px" $height="100%" /></VerticalTrack>
                  <HorizontalTrack><Thumb $width="82px" $height="4px" /></HorizontalTrack>
                </HdlBody>
              </Panel>
              <Pins title="Internal pins" pins={[]} />
            </PanelGrid>
          </LeftSide>
          <OutputPanel>
            <OutputLines>
              {OUTPUT.map((line, i) => (
                <OutputLine key={line} $current={i === OUTPUT.length - 1}>{line}</OutputLine>
              ))}
            </OutputLines>
            <HorizontalTrack><Thumb $width="492px" $height="4px" /></HorizontalTrack>
          </OutputPanel>
        </Workspace>
        <StatusBar role="status">End of script - Comparison ended successfully</StatusBar>
      </Application>

      <Taskbar>
        <Widgets>
          <WidgetsButton aria-label="Widgets"><WidgetsIcon /><Badge>1</Badge></WidgetsButton>
        </Widgets>
        <Apps>
          {APPS.map((a) => (
            <AppButton key={a.name} aria-label={a.name} $active={a.active}>
              {a.icon}
              {a.profile && <Profile $color={a.color}>{a.profile}</Profile>}
              <Indicator $on={a.on} $active={a.active} />
            </AppButton>
          ))}
        </Apps>
        <Tray>
          <TrayButton aria-label="Show hidden icons"><ChevronIcon /></TrayButton>
          <TrayButton aria-label="OneDrive"><CloudIcon /></TrayButton>
          <TrayButton>ENG<br />IN</TrayButton>
          <TrayGroup $gap={16}><WifiIcon /><SoundIcon /><BatteryIcon /></TrayGroup>
          <TrayGroup $gap={18}>
            <TrayButton $align="right">12:48<br />21-08-2024</TrayButton>
            <BellIcon />
          </TrayGroup>
          <TrayButton aria-label="Copilot"><CopilotIcon /></TrayButton>
        </Tray>
      </Taskbar>
    </Desktop>
  );
}
